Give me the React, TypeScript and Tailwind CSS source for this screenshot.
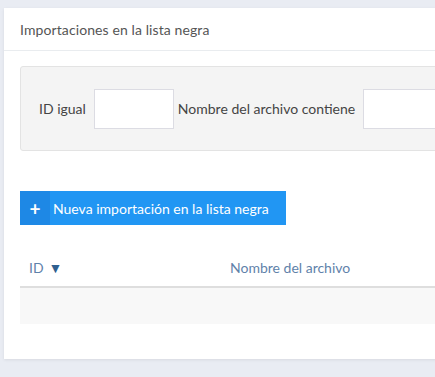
export default function App() {
  return (
    <div className="w-[435px] h-[377px] overflow-hidden bg-[#e9ecf3] font-['Lato',sans-serif] text-[14px]">
      <div className="ml-[4px] mt-[8px] w-[600px] h-[351px] bg-white shadow-[0_1px_3px_rgba(0,0,0,0.08)]">
        <div className="h-[43px] pl-[16px] flex items-center border-b border-[#e9ecef] text-[#555] tracking-[0.1px]">
          Importaciones en la lista negra
        </div>
        <div className="px-[16px] pt-[15px]">
          <div className="h-[85px] bg-[#f4f4f4] border border-[#e3e3e3] rounded-[3px] flex items-center pl-[18px] text-[#444]">
            <span className="mr-[8px]">ID igual</span>
            <input className="w-[80px] h-[40px] bg-white border border-[#dcdce3] outline-none" />
            <span className="ml-[4px] mr-[8px]">Nombre del archivo contiene</span>
            <input className="w-[160px] h-[40px] bg-white border border-[#dcdce3] outline-none" />
          </div>
          <button className="mt-[40px] h-[34px] flex items-stretch bg-[#2196f3] text-white">
            <span className="w-[30px] flex items-center justify-center bg-[#1e88e5] text-[19px] font-bold leading-none">+</span>
            <span className="flex items-center pl-[3px] pr-[17px]">Nueva importación en la lista negra</span>
          </button>
          <div className="mt-[24px]">
            <div className="h-[39px] flex items-center border-b-2 border-[#dedede] text-[#5f82aa]">
              <span className="w-[210px] pl-[9px] flex items-center gap-[5px]">
                ID <span className="text-[#2f5f8f] text-[14px]">▼</span>
              </span>
              <span>Nombre del archivo</span>
            </div>
            <div className="h-[36px] bg-[#f8f8f8]" />
          </div>
        </div>
      </div>
    </div>
  );
}
